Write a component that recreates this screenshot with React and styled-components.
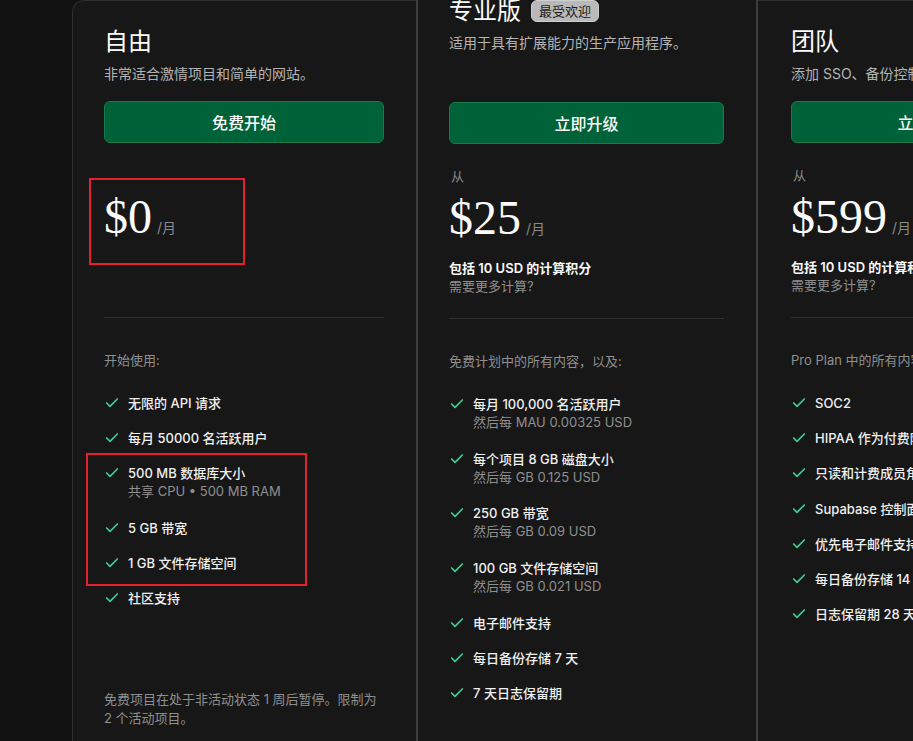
import styled, { createGlobalStyle } from "styled-components";
import { Check } from "lucide-react";

const GlobalStyle = createGlobalStyle`
  html, body {
    margin: 0;
    padding: 0;
    background: #121212;
    overflow: hidden;
  }
  * { box-sizing: border-box; }
`;

const plans = [
  {
    key: "free",
    title: "自由",
    desc: "非常适合激情项目和简单的网站。",
    cta: "免费开始",
    price: "$0",
    from: false,
    credits: null,
    heading: "开始使用:",
    features: [
      { text: "无限的 API 请求" },
      { text: "每月 50000 名活跃用户" },
      { text: "500 MB 数据库大小", sub: "共享 CPU • 500 MB RAM" },
      { text: "5 GB 带宽" },
      { text: "1 GB 文件存储空间" },
      { text: "社区支持" },
    ],
    footer: ["免费项目在处于非活动状态 1 周后暂停。限制为", "2 个活动项目。"],
  },
  {
    key: "pro",
    title: "专业版",
    badge: "最受欢迎",
    raised: true,
    desc: "适用于具有扩展能力的生产应用程序。",
    cta: "立即升级",
    price: "$25",
    from: true,
    credits: true,
    heading: "免费计划中的所有内容，以及:",
    features: [
      { text: "每月 100,000 名活跃用户", sub: "然后每 MAU 0.00325 USD" },
      { text: "每个项目 8 GB 磁盘大小", sub: "然后每 GB 0.125 USD" },
      { text: "250 GB 带宽", sub: "然后每 GB 0.09 USD" },
      { text: "100 GB 文件存储空间", sub: "然后每 GB 0.021 USD" },
      { text: "电子邮件支持" },
      { text: "每日备份存储 7 天" },
      { text: "7 天日志保留期" },
    ],
  },
  {
    key: "team",
    title: "团队",
    desc: "添加 SSO、备份控制和行业认证等功能。",
    cta: "立即升级",
    price: "$599",
    from: true,
    credits: true,
    heading: "Pro Plan 中的所有内容，以及:",
    features: [
      { text: "SOC2" },
      { text: "HIPAA 作为付费附加组件" },
      { text: "只读和计费成员角色" },
      { text: "Supabase 控制面板的 SSO" },
      { text: "优先电子邮件支持和 SLA" },
      { text: "每日备份存储 14 天" },
      { text: "日志保留期 28 天" },
    ],
  },
];

const App = () => {
  return (
    <>
      <GlobalStyle />
      <Page>
        <Row>
          {plans.map((p) => (
            <Card key={p.key} $variant={p.key} $raised={p.raised}>
              <Header $raised={p.raised}>
                <TitleRow>
                  <Title>{p.title}</Title>
                  {p.badge && <Badge>{p.badge}</Badge>}
                </TitleRow>
                <Desc>{p.desc}</Desc>
              </Header>
              <Button>{p.cta}</Button>
              <PriceBlock>
                <From $hidden={!p.from}>从</From>
                <PriceRow>
                  <Price>{p.price}</Price>
                  <Per>/月</Per>
                </PriceRow>
                {p.credits && (
                  <>
                    <Credits>包括 10 USD 的计算积分</Credits>
                    <MoreCompute>需要更多计算?</MoreCompute>
                  </>
                )}
              </PriceBlock>
              <Divider />
              <FeatureHeading>{p.heading}</FeatureHeading>
              <FeatureList>
                {p.features.map((f) => (
                  <Feature key={f.text}>
                    <CheckIcon size={16} strokeWidth={2.5} />
                    <div>
                      <FeatureText>{f.text}</FeatureText>
                      {f.sub && <FeatureSub>{f.sub}</FeatureSub>}
                    </div>
                  </Feature>
                ))}
              </FeatureList>
              {p.footer && (
                <Footer>
                  {p.footer[0]}
                  <br />
                  {p.footer[1]}
                </Footer>
              )}
            </Card>
          ))}
        </Row>
        <Mark style={{ left: 89, top: 178, width: 156, height: 87 }} />
        <Mark style={{ left: 86, top: 453, width: 221, height: 133 }} />
      </Page>
    </>
  );
};

const Page = styled.div`
  position: relative;
  width: 100vw;
  height: 100vh;
  overflow: hidden;
  background: #121212;
  font-family: Inter, "Noto Sans CJK SC", sans-serif;
  color: #ededed;
`;

const Row = styled.div`
  display: flex;
  align-items: stretch;
  padding-left: 72px;
  min-height: 100vh;
`;

const Card = styled.div`
  flex: 0 0 auto;
  display: flex;
  flex-direction: column;
  background: #171717;
  width: ${(p) => (p.$variant === "free" ? "344px" : "342px")};
  padding: 0 32px;
  margin-top: ${(p) => (p.$raised ? "-32px" : "0")};
  border-top: ${(p) => (p.$raised ? "none" : "1px solid #2e2e2e")};
  border-left: ${(p) =>
    p.$variant === "free"
      ? "1px solid #2e2e2e"
      : p.$variant === "pro"
      ? "2px solid #3d3d3d"
      : "none"};
  border-right: ${(p) => (p.$variant === "pro" ? "2px solid #3d3d3d" : "none")};
  border-top-left-radius: ${(p) => (p.$variant === "free" ? "12px" : "0")};
  padding-left: ${(p) => (p.$variant === "team" ? "33px" : "31px")};
`;

const Header = styled.div`
  height: ${(p) => (p.$raised ? "134px" : "100px")};
  display: flex;
  flex-direction: column;
  padding-top: ${(p) => (p.$raised ? "27px" : "25px")};
`;

const TitleRow = styled.div`
  display: flex;
  align-items: center;
  gap: 10px;
`;

const Title = styled.h3`
  margin: 0;
  font-size: 24px;
  line-height: 32px;
  font-weight: 400;
  color: #fafafa;
`;

const Badge = styled.span`
  background: #b9b9b9;
  color: #1c1c1c;
  font-size: 13px;
  line-height: 20px;
  padding: 0 7px;
  border-radius: 6px;
  border: 1px solid #cfcfcf;
`;

const Desc = styled.p`
  margin: 6px 0 0;
  font-size: 14px;
  line-height: 20px;
  color: #b4b4b4;
  white-space: nowrap;
`;

const Button = styled.button`
  height: 42px;
  width: 100%;
  flex: 0 0 auto;
  background: #006239;
  border: 1px solid #1b7a4c;
  border-radius: 6px;
  color: #fafafa;
  font-family: inherit;
  font-size: 16px;
  font-weight: 500;
  white-space: nowrap;
  cursor: pointer;
`;

const PriceBlock = styled.div`
  height: 174px;
  padding-top: 22px;
  flex: 0 0 auto;
`;

const From = styled.div`
  font-size: 13px;
  line-height: 20px;
  color: #8a8a8a;
  padding-left: 2px;
  visibility: ${(p) => (p.$hidden ? "hidden" : "visible")};
`;

const PriceRow = styled.div`
  display: flex;
  align-items: baseline;
  gap: 5px;
  margin-top: 4px;
  height: 56px;
`;

const Price = styled.span`
  font-family: "Liberation Serif", serif;
  font-size: 48px;
  line-height: 56px;
  color: #fafafa;
`;

const Per = styled.span`
  font-size: 14px;
  color: #8a8a8a;
`;

const Credits = styled.div`
  margin-top: 13px;
  font-size: 13px;
  line-height: 18px;
  font-weight: 600;
  color: #fafafa;
  white-space: nowrap;
`;

const MoreCompute = styled.div`
  font-size: 13px;
  line-height: 18px;
  color: #8f8f8f;
`;

const Divider = styled.div`
  height: 1px;
  background: #2e2e2e;
  flex: 0 0 auto;
`;

const FeatureHeading = styled.div`
  margin-top: 32px;
  font-size: 13px;
  line-height: 20px;
  color: #8f8f8f;
  white-space: nowrap;
`;

const FeatureList = styled.ul`
  list-style: none;
  margin: 24px 0 0;
  padding: 0;
  display: flex;
  flex-direction: column;
  gap: 17.2px;
`;

const Feature = styled.li`
  display: flex;
  align-items: flex-start;
  gap: 8px;
`;

const CheckIcon = styled(Check)`
  color: #3ecf8e;
  flex: 0 0 auto;
  margin-top: 1px;
`;

const FeatureText = styled.div`
  font-size: 13px;
  line-height: 18px;
  font-weight: 500;
  color: #f0f0f0;
  white-space: nowrap;
`;

const FeatureSub = styled.div`
  font-size: 13px;
  line-height: 19.5px;
  color: #8f8f8f;
  white-space: nowrap;
`;

const Footer = styled.p`
  margin: 83px 0 0;
  font-size: 13px;
  line-height: 19px;
  color: #8f8f8f;
  white-space: nowrap;
`;

const Mark = styled.div`
  position: absolute;
  border: 2px solid #e3202b;
  pointer-events: none;
`;

export default App;
